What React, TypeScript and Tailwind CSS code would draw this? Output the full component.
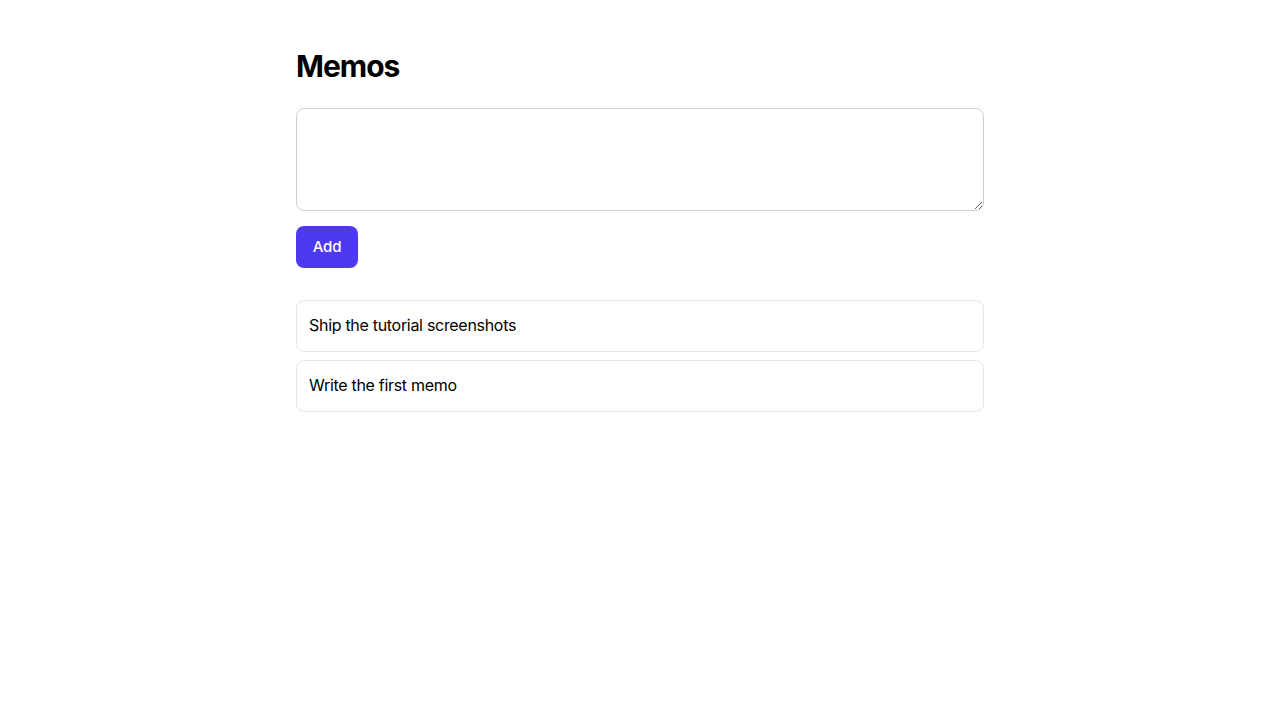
import { useState } from 'react';

const App = () => {
  const [draft, setDraft] = useState('');
  const [memos, setMemos] = useState<string[]>(['Ship the tutorial screenshots', 'Write the first memo']);

  const addMemo = () => {
    const text = draft.trim();
    if (!text) return;
    setMemos([text, ...memos]);
    setDraft('');
  };

  return (
    <div className="min-h-screen bg-white text-black font-['Inter',_sans-serif]">
      <div className="max-w-[720px] mx-auto px-4 pt-12">
        <h1 className="text-[30px] leading-9 font-bold tracking-[-1px]">Memos</h1>
        <textarea
          value={draft}
          onChange={(e) => setDraft(e.target.value)}
          className="block w-full h-[103px] mt-6 rounded-lg border border-[#cfcfcf] p-3 text-base outline-none"
        />
        <button
          onClick={addMemo}
          className="mt-[15px] h-[42px] w-[62px] rounded-lg bg-[#4f39f0] text-white text-[15px] font-medium tracking-[-0.2px]"
        >
          Add
        </button>
        <ul className="mt-8 flex flex-col gap-2">
          {memos.map((memo, i) => (
            <li key={i} className="rounded-lg border border-[#e6e6e6] px-3 pt-[12px] pb-[13px] text-base leading-[25px] tracking-[-0.3px]">
              {memo}
            </li>
          ))}
        </ul>
      </div>
    </div>
  );
};

export default App;
